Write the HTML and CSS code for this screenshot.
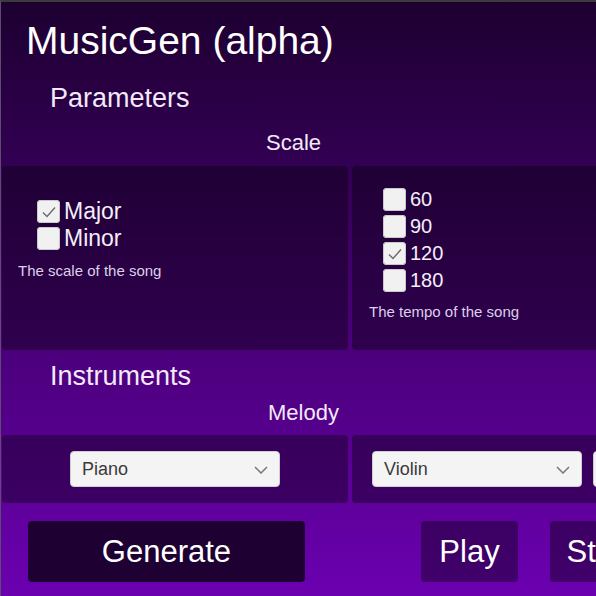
FILE: index.html
```html
<!DOCTYPE html>
<html>
<head>
<meta charset="utf-8">
<title>MusicGen (alpha)</title>
<link rel="stylesheet" href="styles.css">
</head>
<body>
<div class="app">
  <h1 class="title">MusicGen (alpha)</h1>

  <h2 class="section">Parameters</h2>
  <h3 class="sub sub-scale">Scale</h3>
  <div class="cards cards-params">
    <div class="card card-scale">
      <div class="checks">
        <label class="check big"><span class="box on"><svg viewBox="0 0 22 22" width="22" height="22"><path d="M5 11.5 L9 15.5 L17 6.5" fill="none" stroke="#6a6a6a" stroke-width="1.4"/></svg></span>Major</label>
        <label class="check big"><span class="box"></span>Minor</label>
      </div>
      <p class="desc">The scale of the song</p>
    </div>
    <div class="card card-tempo">
      <div class="checks">
        <label class="check small"><span class="box"></span>60</label>
        <label class="check small"><span class="box"></span>90</label>
        <label class="check small"><span class="box on"><svg viewBox="0 0 22 22" width="22" height="22"><path d="M5 11.5 L9 15.5 L17 6.5" fill="none" stroke="#6a6a6a" stroke-width="1.4"/></svg></span>120</label>
        <label class="check small"><span class="box"></span>180</label>
      </div>
      <p class="desc">The tempo of the song</p>
    </div>
  </div>

  <h2 class="section section-inst">Instruments</h2>
  <h3 class="sub sub-melody">Melody</h3>
  <div class="cards cards-inst">
    <div class="card card-center">
      <div class="select"><span>Piano</span><svg class="chev" viewBox="0 0 14 8" width="14" height="8"><path d="M1 1 L7 7 L13 1" fill="none" stroke="#777" stroke-width="1.5"/></svg></div>
    </div>
    <div class="card card-multi">
      <div class="select"><span>Violin</span><svg class="chev" viewBox="0 0 14 8" width="14" height="8"><path d="M1 1 L7 7 L13 1" fill="none" stroke="#777" stroke-width="1.5"/></svg></div>
      <div class="select"><span>Piano</span><svg class="chev" viewBox="0 0 14 8" width="14" height="8"><path d="M1 1 L7 7 L13 1" fill="none" stroke="#777" stroke-width="1.5"/></svg></div>
    </div>
  </div>

  <div class="actions">
    <button class="btn btn-generate">Generate</button>
    <button class="btn btn-play">Play</button>
    <button class="btn btn-stop">Stop</button>
  </div>
</div>
</body>
</html>
```

FILE: styles.css
```css
html, body {
  margin: 0;
  padding: 0;
  width: 596px;
  height: 596px;
  overflow: hidden;
  background: #3a3a3a;
}

.app {
  box-sizing: border-box;
  width: 596px;
  height: 596px;
  overflow: hidden;
  border-top: 2px solid #3b3b3b;
  border-left: 1px solid #5e4c6c;
  background: linear-gradient(180deg, #1d0030 0%, #6b00b0 100%);
  font-family: "Liberation Sans", Arial, sans-serif;
  color: #fff;
}

.title {
  margin: 0;
  padding: 16px 0 0 25px;
  font-size: 39px;
  line-height: 46px;
  font-weight: normal;
  color: #fff;
}

.section {
  margin: 18px 0 0 0;
  padding-left: 49px;
  font-size: 27px;
  line-height: 32px;
  font-weight: normal;
  color: #f2eaf8;
}

.section-inst {
  margin-top: 10px;
}

.sub {
  margin: 16px 0 0 0;
  font-size: 22px;
  line-height: 26px;
  font-weight: normal;
  color: #f2eaf8;
}

.sub-scale {
  padding-left: 265px;
}

.sub-melody {
  margin-top: 8px;
  padding-left: 267px;
}

.cards {
  display: flex;
  gap: 4px;
  margin-left: 1px;
  width: 720px;
}

.cards-params {
  margin-top: 10px;
  height: 184px;
}

.cards-inst {
  margin-top: 9px;
  height: 68px;
}

.card {
  box-sizing: border-box;
  width: 346px;
  flex: none;
  border-radius: 4px;
  background: rgba(0, 0, 0, 0.36);
}

.card-scale {
  padding: 32px 0 0 16px;
}

.card-scale .checks {
  margin-left: 19px;
}

.card-tempo {
  padding: 20px 0 0 17px;
}

.card-tempo .checks {
  margin-left: 14px;
}

.checks {
  display: flex;
  flex-direction: column;
}

.check {
  display: flex;
  align-items: center;
  gap: 4px;
  height: 27px;
  color: #f4eefa;
}

.check.big {
  font-size: 23px;
}

.check.small {
  font-size: 20px;
}

.box {
  box-sizing: border-box;
  width: 23px;
  height: 23px;
  flex: none;
  border-radius: 4px;
  background: #f1f1f1;
  box-shadow: inset 0 0 0 1px #c9c9c9;
  display: flex;
  align-items: center;
  justify-content: center;
}

.desc {
  margin: 10px 0 0 0;
  font-size: 15px;
  line-height: 18px;
  color: #ddd0ea;
}

.card-tempo .desc {
  margin-top: 9px;
}

.card-center {
  display: flex;
  align-items: center;
  justify-content: center;
}

.card-multi {
  display: flex;
  align-items: center;
  gap: 11px;
  padding-left: 20px;
  width: 400px;
}

.select {
  box-sizing: border-box;
  width: 210px;
  height: 36px;
  flex: none;
  display: flex;
  align-items: center;
  justify-content: space-between;
  padding: 0 11px 0 11px;
  background: #f4f4f4;
  border: 1px solid #cfcfcf;
  border-radius: 4px;
  font-size: 18px;
  color: #3a3a3a;
}

.chev {
  margin-top: 1px;
}

.actions {
  display: flex;
  margin-top: 18px;
  padding-left: 27px;
}

.btn {
  height: 61px;
  border: none;
  border-radius: 4px;
  font-family: "Liberation Sans", Arial, sans-serif;
  font-size: 31px;
  color: #fff;
  padding: 0;
  flex: none;
}

.btn-generate {
  width: 277px;
  background: #1f0033;
}

.btn-play {
  width: 97px;
  margin-left: 116px;
  background: rgba(0, 0, 0, 0.38);
}

.btn-stop {
  width: 97px;
  margin-left: 32px;
  background: rgba(0, 0, 0, 0.38);
}
```
